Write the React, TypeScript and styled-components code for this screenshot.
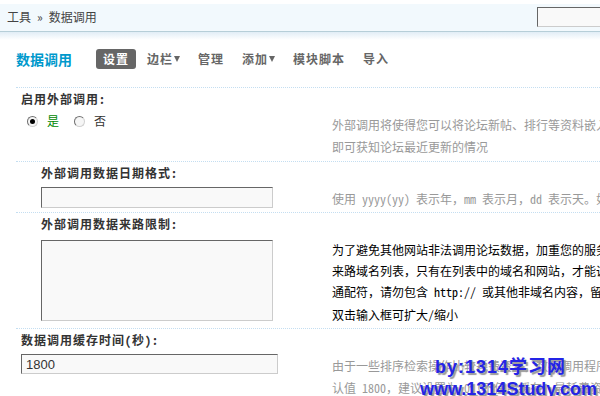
import { FC } from "react";
import styled, { createGlobalStyle } from "styled-components";

const GlobalStyle = createGlobalStyle`
  html, body {
    margin: 0;
    padding: 0;
    background: #fff;
    overflow: hidden;
  }
  body {
    font: 12px "Noto Sans Mono CJK SC", "Liberation Sans", "Noto Sans CJK SC", sans-serif;
    color: #333;
  }
`;

const tabs = [
  { name: "设置", active: true },
  { name: "边栏", menu: true },
  { name: "管理" },
  { name: "添加", menu: true },
  { name: "模块脚本" },
  { name: "导入" },
];

const App: FC = () => {
  return (
    <Page>
      <GlobalStyle />
      <TopBar>
        <span>工具 &raquo; 数据调用</span>
        <SearchBox type="text" />
      </TopBar>
      <Shade />
      <TitleBar>
        <h3>数据调用</h3>
        <Nav>
          {tabs.map((tab) => (
            <NavItem key={tab.name} $active={!!tab.active}>
              {tab.name}
              {tab.menu && <Arrow />}
            </NavItem>
          ))}
        </Nav>
      </TitleBar>

      <Table>
        <Section>
          <Label $indent={5}>启用外部调用:</Label>
          <Body>
            <Field $indent={5}>
              <RadioRow>
                <Radio $checked />
                <RadioText $on>是</RadioText>
                <Radio $gap />
                <RadioText>否</RadioText>
              </RadioRow>
            </Field>
            <Tip $lh={22}>
              <div>外部调用将使得您可以将论坛新帖、排行等资料嵌入到您的网页中，访问者不必登录论坛</div>
              <div>即可获知论坛最近更新的情况</div>
            </Tip>
          </Body>
        </Section>

        <Section>
          <Label $indent={25}>外部调用数据日期格式:</Label>
          <Body>
            <Field $indent={25}>
              <TextInput type="text" defaultValue="" $w={232} $h={21} />
            </Field>
            <Tip $lh={21}>
              <div>使用 yyyy(yy) 表示年，mm 表示月，dd 表示天。如 yyyy-mm-dd 表示 2000-1-1</div>
            </Tip>
          </Body>
        </Section>

        <Section>
          <Label $indent={25}>外部调用数据来路限制:</Label>
          <Body>
            <Field $indent={25}>
              <TextArea defaultValue="" />
            </Field>
            <Tip $lh={21} $dark>
              <div>为了避免其他网站非法调用论坛数据，加重您的服务器负担，您可以设置允许调用论坛数据的</div>
              <div>来路域名列表，只有在列表中的域名和网站，才能调用您论坛的数据。每个域名一行，不支持</div>
              <div>通配符，请勿包含 http:// 或其他非域名内容，留空为不限制来路，即任何网站均可调用</div>
              <Note>双击输入框可扩大/缩小</Note>
            </Tip>
          </Body>
        </Section>

        <Section>
          <Label $indent={5}>数据调用缓存时间(秒):</Label>
          <Body>
            <Field $indent={5}>
              <TextInput type="text" defaultValue="1800" $w={257} $h={20} />
            </Field>
            <Tip $lh={22}>
              <div>由于一些排序检索操作比较耗费资源，数据调用程序采用缓存技术来实现数据的定期更新，默</div>
              <div>认值 1800，建议设置为 0（不使用缓存，最耗费资源）或 1800～43200 之间的数值</div>
            </Tip>
          </Body>
        </Section>
      </Table>

      <Watermark>
        <div className="by">by:1314学习网</div>
        <div>www.1314Study.com</div>
      </Watermark>
    </Page>
  );
};
export default App;

const Page = styled.div`
  position: relative;
  width: 700px;
  height: 396px;
  padding-top: 4px;
  box-sizing: border-box;
`;

const TopBar = styled.div`
  height: 24px;
  padding: 0 0 3px 7px;
  background: #f2f9fd;
  border-bottom: 1px solid #b6ced8;
  display: flex;
  align-items: center;
  color: #444;
`;

const SearchBox = styled.input`
  align-self: flex-start;
  margin: 3px 13px 0 auto;
  width: 150px;
  height: 20px;
  box-sizing: border-box;
  padding: 0 4px;
  background: #f9f9f9;
  border: 1px solid;
  border-color: #666 #ccc #ccc #666;
  outline: none;
`;

const Shade = styled.div`
  height: 8px;
  background: linear-gradient(#e1edf6, #fff);
`;

const TitleBar = styled.div`
  display: flex;
  align-items: center;
  height: 20px;
  margin-top: 9px;
  padding-left: 16px;
  h3 {
    margin: 0 24px 0 0;
    font-size: 14px;
    line-height: 20px;
    color: #09c;
  }
`;

const Nav = styled.ul`
  display: flex;
  margin: 0;
  padding: 0;
  list-style: none;
`;

const NavItem = styled.li<{ $active: boolean }>`
  display: flex;
  align-items: center;
  padding: 0 7px;
  margin-right: 4px;
  line-height: 20px;
  border-radius: 3px;
  font-weight: bold;
  letter-spacing: 1px;
  color: ${(p) => (p.$active ? "#fff" : "#666")};
  background: ${(p) => (p.$active ? "#666" : "transparent")};
`;

const Arrow = styled.span`
  width: 0;
  height: 0;
  margin-left: 1px;
  border-left: 3px solid transparent;
  border-right: 3px solid transparent;
  border-top: 6px solid #666;
`;

const Table = styled.div`
  margin: 18px 0 0 16px;
`;

const Section = styled.div`
  border-top: 1px dotted #c4def1;
`;

const Label = styled.div<{ $indent: number }>`
  padding-left: ${(p) => p.$indent}px;
  line-height: 21px;
  font-weight: bold;
  letter-spacing: 1px;
  color: #333;
`;

const Body = styled.div`
  display: grid;
  grid-template-columns: 316px auto;
  align-items: start;
  padding-bottom: 3px;
`;

const Field = styled.div<{ $indent: number }>`
  padding: 4px 0 0 ${(p) => p.$indent}px;
`;

const Tip = styled.div<{ $lh: number; $dark?: boolean }>`
  padding-top: 5px;
  line-height: ${(p) => p.$lh}px;
  color: ${(p) => (p.$dark ? "#000" : "#999")};
  white-space: nowrap;
`;

const Note = styled.div`
  margin-top: 2px;
`;

const RadioRow = styled.div`
  display: flex;
  align-items: center;
  height: 16px;
  padding-left: 6px;
`;

const Radio = styled.span<{ $checked?: boolean; $gap?: boolean }>`
  position: relative;
  width: 11px;
  height: 11px;
  box-sizing: border-box;
  margin-left: ${(p) => (p.$gap ? "15px" : "0")};
  border-radius: 50%;
  border: 1px solid;
  border-color: #6f6f6f #d0d0d0 #d0d0d0 #6f6f6f;
  background: #f6f6f6;
  &::after {
    content: "";
    display: ${(p) => (p.$checked ? "block" : "none")};
    position: absolute;
    left: 2px;
    top: 2px;
    width: 5px;
    height: 5px;
    border-radius: 50%;
    background: #000;
  }
`;

const RadioText = styled.span<{ $on?: boolean }>`
  margin-left: 9px;
  line-height: 16px;
  color: ${(p) => (p.$on ? "#080" : "#333")};
`;

const TextInput = styled.input<{ $w: number; $h: number }>`
  display: block;
  width: ${(p) => p.$w}px;
  height: ${(p) => p.$h}px;
  box-sizing: border-box;
  padding: 0 4px;
  font: 13px "Liberation Sans", sans-serif;
  color: #333;
  background: #f9f9f9;
  border: 1px solid;
  border-color: #666 #ccc #ccc #666;
  outline: none;
`;

const TextArea = styled.textarea`
  display: block;
  width: 232px;
  height: 81px;
  margin-top: 2px;
  box-sizing: border-box;
  resize: none;
  background: #f9f9f9;
  border: 1px solid;
  border-color: #666 #ccc #ccc #666;
  outline: none;
`;

const Watermark = styled.div`
  position: absolute;
  left: 420px;
  top: 356px;
  font: bold 18px "Liberation Sans", "Noto Sans CJK SC", sans-serif;
  line-height: 22px;
  color: #2424e6;
  text-shadow: 2px 2px 1px #9a9a9a;
  white-space: nowrap;
  .by {
    padding-left: 15px;
    letter-spacing: 1px;
  }
`;
